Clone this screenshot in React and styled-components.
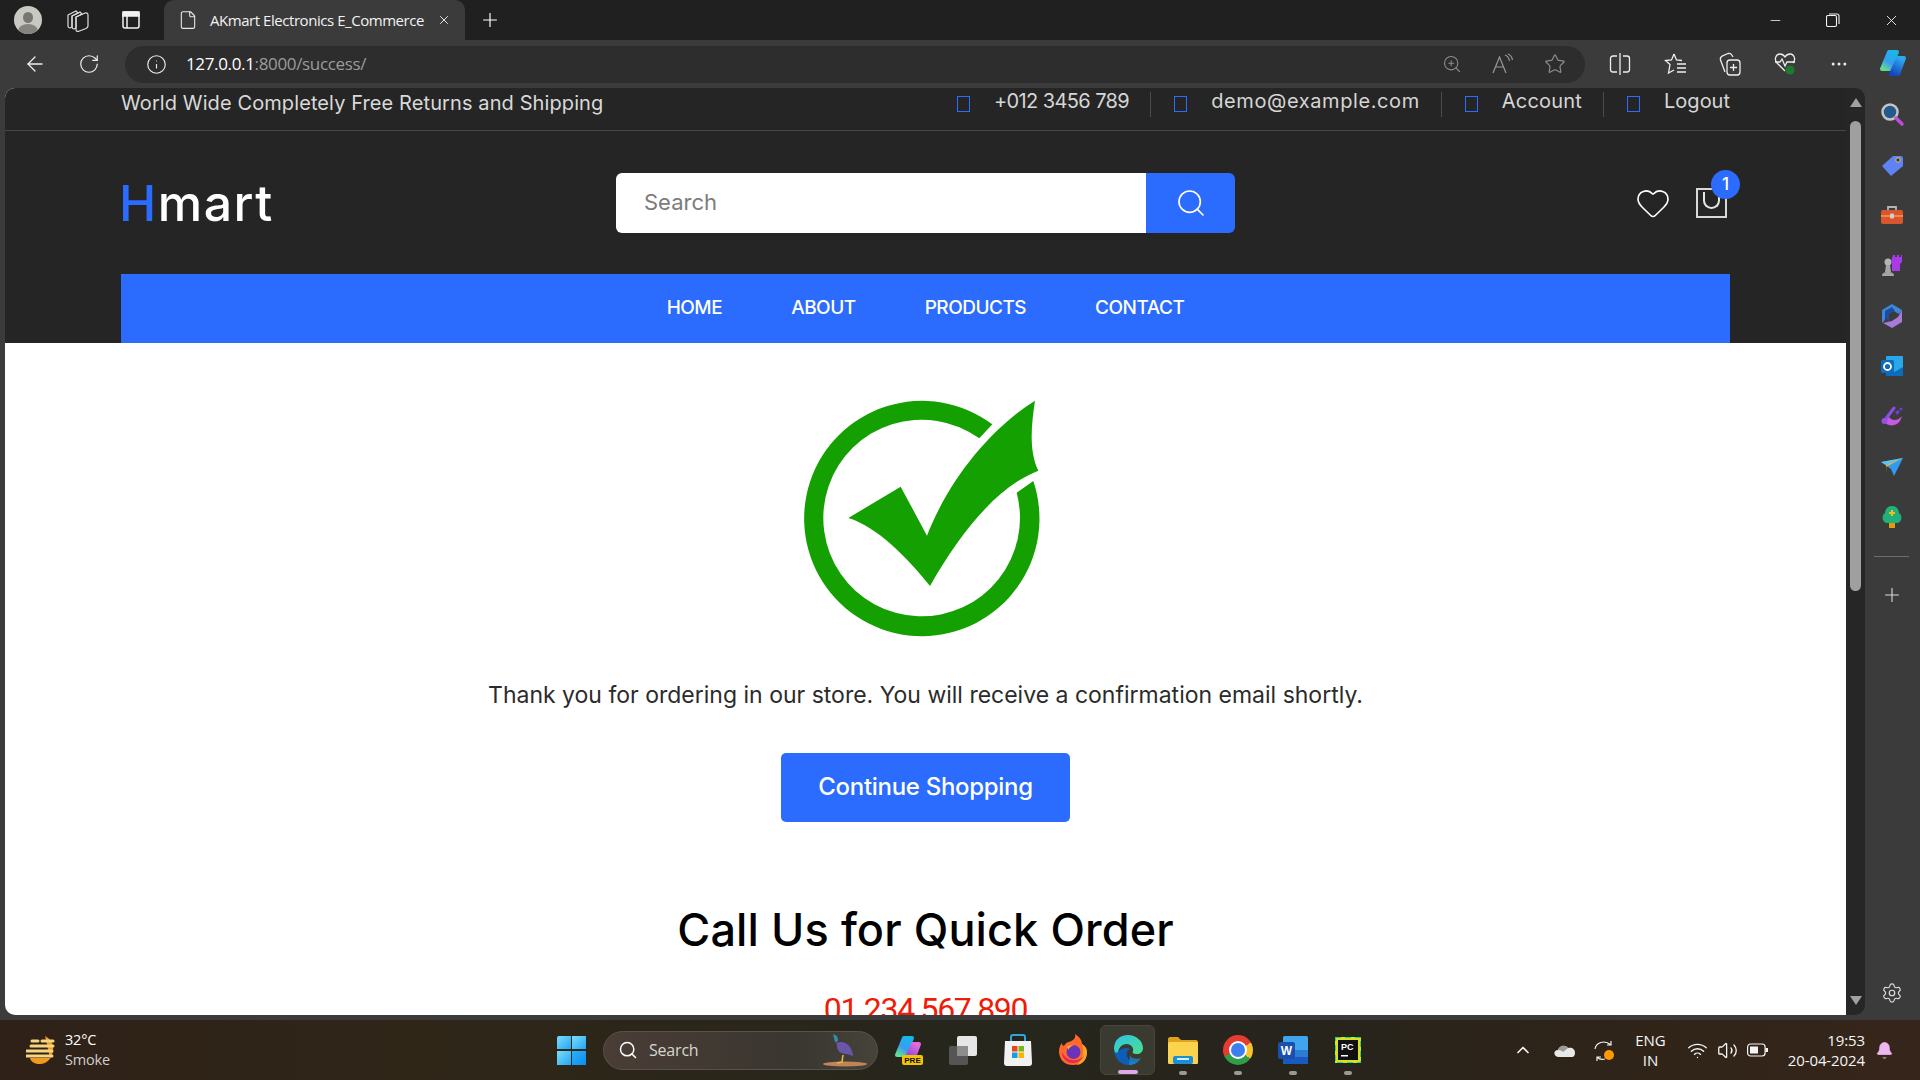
import React from "react";
import styled, { createGlobalStyle } from "styled-components";
import {
  ArrowLeft,
  RotateCw,
  Info,
  ZoomIn,
  Star,
  Plus,
  X,
  Minus,
  Settings,
  Search,
  Heart,
  Wifi,
  Volume2,
  Bell,
  ChevronUp,
  File,
  MoreHorizontal,
} from "lucide-react";

const BLUE = "#2b6bfd";

const GlobalStyle = createGlobalStyle`
  html, body {
    margin: 0;
    padding: 0;
    width: 1920px;
    height: 1080px;
    overflow: hidden;
    background: #3b3b3b;
  }
  * { box-sizing: border-box; }
`;

const Screen = styled.div`
  width: 1920px;
  height: 1080px;
  display: flex;
  flex-direction: column;
  background: #3b3b3b;
  font-family: "Inter", "Liberation Sans", sans-serif;
`;

/* browser title bar */
const TitleBar = styled.div`
  height: 40px;
  flex: none;
  display: flex;
  align-items: center;
  background: #202020;
  color: #fff;
  padding-left: 14px;
`;

const Avatar = styled.div`
  width: 28px;
  height: 28px;
  border-radius: 50%;
  background: #c9c9c4;
  position: relative;
  overflow: hidden;
  margin-right: 25px;
  &::before {
    content: "";
    position: absolute;
    left: 9px;
    top: 6px;
    width: 10px;
    height: 11px;
    border-radius: 50%;
    background: #77766f;
  }
  &::after {
    content: "";
    position: absolute;
    left: 4px;
    top: 18px;
    width: 20px;
    height: 14px;
    border-radius: 50%;
    background: #85847e;
  }
`;

const ChromeGlyph = styled.svg`
  flex: none;
  display: block;
  margin-left: ${(p) => p.$ml || 0}px;
`;

const Tab = styled.div`
  width: 301px;
  height: 40px;
  margin-left: 24px;
  background: #3b3b3b;
  border-radius: 10px 10px 0 0;
  display: flex;
  align-items: center;
  padding-left: 14px;
`;

const TabTitle = styled.span`
  margin-left: 12px;
  width: 227px;
  font-family: "Open Sans", sans-serif;
  font-size: 15px;
  letter-spacing: -0.45px;
  color: #f2f2f2;
  white-space: nowrap;
`;

const NewTab = styled.div`
  margin-left: 14px;
  display: flex;
`;

const WindowControls = styled.div`
  margin-left: auto;
  display: flex;
  align-items: center;
  gap: 43px;
  padding-right: 20px;
`;

/* browser toolbar */
const Toolbar = styled.div`
  height: 48px;
  flex: none;
  display: flex;
  align-items: center;
  color: #efefef;
  padding-left: 23px;
  background: #3b3b3b;
`;

const NavGlyphs = styled.div`
  display: flex;
  align-items: center;
  gap: 31px;
  width: 102px;
`;

const AddressBar = styled.div`
  width: 1460px;
  height: 37px;
  border-radius: 19px;
  background: #2d2d2d;
  display: flex;
  align-items: center;
  padding: 0 19px 0 21px;
`;

const Url = styled.span`
  margin: -2px 0 0 19px;
  font-family: "Open Sans", sans-serif;
  font-size: 17px;
  letter-spacing: -0.35px;
  color: #9b9b9b;
  b {
    font-weight: 400;
    color: #fff;
  }
`;

const AddressActions = styled.div`
  margin-left: auto;
  display: flex;
  align-items: center;
  gap: 30px;
  color: #8c8c8c;
`;

const ToolActions = styled.div`
  margin-left: 24px;
  display: flex;
  align-items: center;
  gap: 33px;
  svg:last-child {
    margin-left: -4px;
  }
`;

/* page + scrollbar + sidebar */
const Workspace = styled.div`
  height: 927px;
  flex: none;
  display: flex;
  padding-left: 5px;
`;

const Viewport = styled.main`
  width: 1841px;
  height: 927px;
  overflow: hidden;
  background: #fff;
  border-radius: 10px 0 0 10px;
`;

const TopBar = styled.div`
  height: 43px;
  display: flex;
  align-items: center;
  justify-content: space-between;
  background: #252525;
  border-bottom: 1px solid #474747;
  padding: 0 116px;
  font-family: "Inter", sans-serif;
  color: #d6d6d6;
`;

const Promo = styled.span`
  font-size: 20px;
  letter-spacing: 0.1px;
  margin-top: -12px;
  color: #d9d9d9;
`;

const TopLinks = styled.div`
  display: flex;
  align-items: center;
  height: 25px;
  margin-top: -9px;
`;

const TopLink = styled.a`
  display: flex;
  align-items: center;
  height: 25px;
  font-size: 20px;
  letter-spacing: ${(p) => p.$ls || "0"};
  padding-left: 23px;
  padding-right: ${(p) => (p.$last ? 0 : 21)}px;
  padding-bottom: 7px;
  border-right: ${(p) => (p.$last ? "none" : "1px solid #4c4c4c")};
  &:first-child {
    padding-left: 0;
  }
`;

const Tofu = styled.i`
  width: 13px;
  height: 16px;
  border: 1px solid ${BLUE};
  margin: 6px 24px 0 0;
`;

const Header = styled.header`
  height: 143px;
  display: flex;
  align-items: center;
  background: #252525;
  padding: 0 116px;
`;

const Logo = styled.div`
  width: 495px;
  margin-left: -2px;
  margin-right: 2px;
  font-size: 50px;
  font-weight: 500;
  letter-spacing: 1.5px;
  color: #fff;
  span {
    color: ${BLUE};
  }
`;

const SearchForm = styled.form`
  width: 619px;
  height: 60px;
  display: flex;
  margin: 0;
`;

const SearchInput = styled.input`
  width: 530px;
  height: 60px;
  border: none;
  outline: none;
  border-radius: 6px 0 0 6px;
  padding: 0 28px 2px;
  font-family: "Inter", sans-serif;
  font-size: 22px;
  color: #777;
  &::placeholder {
    color: #7c7c7c;
    opacity: 1;
  }
`;

const SearchButton = styled.button`
  width: 89px;
  height: 60px;
  border: none;
  border-radius: 0 6px 6px 0;
  background: ${BLUE};
  color: #fff;
  display: flex;
  align-items: center;
  justify-content: center;
  padding: 0;
`;

const HeaderIcons = styled.div`
  margin-left: auto;
  display: flex;
  align-items: center;
  gap: 25px;
  margin-right: 3px;
  color: #fff;
`;

const Cart = styled.div`
  position: relative;
  width: 31px;
  height: 30px;
  border: 2px solid #d8d8d8;
`;

const CartHandle = styled.span`
  position: absolute;
  left: 5px;
  top: 2px;
  width: 17px;
  height: 17px;
  border: 2px solid #e6e6e6;
  border-top: none;
  border-radius: 0 0 10px 10px;
`;

const Badge = styled.span`
  position: absolute;
  right: -15px;
  top: -20px;
  width: 29px;
  height: 29px;
  border-radius: 50%;
  background: ${BLUE};
  color: #fff;
  font-size: 17px;
  font-weight: 500;
  display: flex;
  align-items: center;
  justify-content: center;
`;

const NavBand = styled.div`
  background: #252525;
  padding: 0 116px;
`;

const Nav = styled.nav`
  height: 69px;
  padding-bottom: 2px;
  background: ${BLUE};
  display: flex;
  align-items: center;
  justify-content: center;
  gap: 69px;
`;

const NavLink = styled.a`
  font-size: 19px;
  font-weight: 500;
  letter-spacing: -0.5px;
  color: #fff;
`;

const Content = styled.section`
  display: flex;
  flex-direction: column;
  align-items: center;
  padding-top: 37px;
`;

const Mark = styled.svg`
  display: block;
  flex: none;
  margin-right: 11px;
`;

const Message = styled.p`
  margin: 30px 0 0;
  height: 30px;
  line-height: 30px;
  font-size: 23px;
  color: #2b2b2b;
`;

const ContinueButton = styled.button`
  margin-top: 43px;
  width: 289px;
  height: 69px;
  padding: 0 0 2px;
  border: none;
  border-radius: 5px;
  background: ${BLUE};
  color: #fff;
  font-family: "Inter", sans-serif;
  font-size: 24px;
  font-weight: 500;
  letter-spacing: -0.3px;
`;

const CallTitle = styled.h2`
  margin: 73px 0 0;
  line-height: 70px;
  font-size: 45px;
  font-weight: 500;
  letter-spacing: 0.1px;
  color: #000;
`;

const Phone = styled.a`
  margin-top: 24px;
  font-family: "Roboto", sans-serif;
  font-size: 32px;
  line-height: 40px;
  letter-spacing: -1.3px;
  color: #ee1c08;
`;

/* scrollbar */
const Scrollbar = styled.div`
  width: 19px;
  height: 927px;
  flex: none;
  background: #262626;
  border-radius: 0 10px 10px 0;
  display: flex;
  flex-direction: column;
  align-items: center;
  padding-top: 10px;
`;

const ScrollArrow = styled.span`
  width: 0;
  height: 0;
  border-left: 6.5px solid transparent;
  border-right: 6.5px solid transparent;
  border-bottom: ${(p) => (p.$down ? "none" : "9px solid #a0a0a0")};
  border-top: ${(p) => (p.$down ? "9px solid #a0a0a0" : "none")};
  margin-top: ${(p) => (p.$down ? "auto" : 0)};
  margin-bottom: ${(p) => (p.$down ? "10px" : 0)};
`;

const ScrollThumb = styled.div`
  width: 11px;
  height: 470px;
  margin-top: 14px;
  border-radius: 6px;
  background: #9f9f9f;
`;

/* edge sidebar */
const SideBar = styled.aside`
  flex: 1;
  display: flex;
  flex-direction: column;
  align-items: center;
  padding: 1px 2px 0 0;
  color: #dcdcdc;
`;

const SideItem = styled.div`
  width: 26px;
  height: 50.4px;
  display: flex;
  align-items: center;
  justify-content: center;
  flex: none;
`;

const SideRule = styled.div`
  width: 35px;
  height: 1px;
  background: #6d6d6d;
  margin: 13px 0 27px;
`;

const SideBottom = styled.div`
  margin-top: auto;
  margin-bottom: 11px;
  display: flex;
`;

/* taskbar */
const TaskbarGap = styled.div`
  height: 5px;
  flex: none;
`;

const Taskbar = styled.footer`
  height: 60px;
  flex: none;
  display: flex;
  align-items: center;
  padding-left: 26px;
  background: linear-gradient(90deg, #2f2118 0%, #2f2618 22%, #27261c 48%, #26241c 66%, #2f2419 84%, #36251a 100%);
  color: #fff;
  font-family: "Open Sans", sans-serif;
`;

const Weather = styled.div`
  width: 531px;
  display: flex;
  align-items: center;
  gap: 7px;
`;

const WeatherText = styled.div`
  font-size: 14.5px;
  line-height: 20px;
  letter-spacing: -0.2px;
  span {
    display: block;
    color: #cfcfcf;
  }
`;

const StartButton = styled.div`
  width: 29px;
  height: 29px;
  display: grid;
  grid-template-columns: 1fr 1fr;
  grid-template-rows: 1fr 1fr;
  gap: 1.5px;
  margin-right: 17px;
  i {
    background: linear-gradient(135deg, #7ddcfb, #21a6f5);
  }
  i:nth-child(1) {
    border-radius: 2px 0 0 0;
  }
  i:nth-child(4) {
    background: linear-gradient(135deg, #2cb0fa, #0b8df0);
  }
`;

const TaskSearch = styled.div`
  width: 275px;
  height: 39px;
  border-radius: 20px;
  border: 1px solid #5a5148;
  background: linear-gradient(90deg, #4a3d36, #3a3630 70%, #45433a);
  display: flex;
  align-items: center;
  padding-left: 14px;
  gap: 11px;
  color: #fff;
  span {
    font-size: 16px;
    letter-spacing: -0.2px;
    color: #d6d6d0;
  }
  svg:last-child {
    margin-left: auto;
    margin-right: 8px;
  }
`;

const TaskIcons = styled.div`
  margin-left: 2px;
  display: flex;
  align-items: center;
`;

const TaskItem = styled.div`
  position: relative;
  width: 55px;
  height: 50px;
  border-radius: 6px;
  display: flex;
  align-items: center;
  justify-content: center;
  background: ${(p) => (p.$active ? "#3a3a30" : "transparent")};
  border: 1px solid ${(p) => (p.$active ? "#46463c" : "transparent")};
  &::after {
    content: "";
    display: ${(p) => (p.$open || p.$active ? "block" : "none")};
    position: absolute;
    left: 50%;
    bottom: ${(p) => (p.$active ? "0" : "-1px")};
    transform: translateX(-50%);
    width: ${(p) => (p.$active ? "20px" : "8px")};
    height: 4px;
    border-radius: 2px;
    background: ${(p) => (p.$active ? "#e0a8e8" : "#9a9a94")};
  }
`;

const ChromeLogo = styled.div`
  position: relative;
  width: 30px;
  height: 30px;
  border-radius: 50%;
  background: conic-gradient(#e53b30 0deg 60deg, #fbc02d 60deg 125deg, #2e9e49 125deg 245deg, #e53b30 245deg 360deg);
  &::after {
    content: "";
    position: absolute;
    left: 8px;
    top: 8px;
    width: 14px;
    height: 14px;
    border-radius: 50%;
    background: #3d7ff0;
    box-shadow: 0 0 0 2px #fff;
  }
`;

const Tray = styled.div`
  margin-left: auto;
  display: flex;
  align-items: center;
  font-size: 15px;
  color: #f5f5f5;
`;

const TraySlot = styled.div`
  display: flex;
  margin-left: ${(p) => p.$ml}px;
`;

const Lang = styled.div`
  margin-left: 20px;
  text-align: center;
  font-size: 15px;
  line-height: 20px;
`;

const Clock = styled.div`
  margin-left: 20px;
  text-align: right;
  font-size: 15px;
  line-height: 20px;
  letter-spacing: -0.1px;
`;

const BellSlot = styled.div`
  margin: 0 26px 0 10px;
  display: flex;
  color: #edb6f0;
`;

const WorkspacesIcon = () => (
  <ChromeGlyph width="22" height="24" viewBox="0 0 22 24" fill="none" stroke="#dedede" strokeWidth="1.2">
    <path d="M1 7l8-4 2 2-6 3v11l-2 1c-1 0-2-1-2-2z" />
    <path d="M5 8l8-4 2 2-6 3v11l-2 1c-1 0-2-1-2-2z" />
    <path d="M9 9l9-4c2-.500 3 .500 3 2v11c0 1-1 2-2 2.500l-8 3c-1 0-2-1-2-2z" />
  </ChromeGlyph>
);

const VerticalTabsIcon = () => (
  <ChromeGlyph width="18" height="18" viewBox="0 0 18 18" fill="none" stroke="#f2f2f2" strokeWidth="1.5" $ml={33}>
    <rect x="1" y="1" width="16" height="16" rx="2" />
    <rect x="1" y="1" width="16" height="4" fill="#f2f2f2" />
    <path d="M5 5v12" />
  </ChromeGlyph>
);

const RestoreIcon = () => (
  <ChromeGlyph width="14" height="14" viewBox="0 0 14 14" fill="none" stroke="#f2f2f2" strokeWidth="1.1">
    <rect x="0.5" y="2.5" width="10" height="11" rx="1.5" />
    <path d="M3 1h8c1.2 0 2 .8 2 2v8" />
  </ChromeGlyph>
);

const ReadAloudIcon = () => (
  <svg width="22" height="22" viewBox="0 0 22 22" fill="none" stroke="#9a9a9a" strokeWidth="1.200">
    <path d="M1 20L7.500 4 14 20M3.500 14h8" />
    <path d="M13 2c3 1 4 3 4.500 6M16 1c2.500 1 4 3 4.500 6" />
  </svg>
);

const SplitIcon = () => (
  <svg width="22" height="24" viewBox="0 0 22 24" fill="none" stroke="#efefef" strokeWidth="1.300">
    <path d="M11 1v22" />
    <path d="M8 4H4C2.500 4 1.500 5 1.500 6.500v11C1.500 19 2.500 20 4 20h4M14 4h4c1.500 0 2.500 1 2.500 2.500v11c0 1.500-1 2.500-2.500 2.500h-4" />
  </svg>
);

const FavoritesIcon = () => (
  <svg width="22" height="24" viewBox="0 0 22 24" fill="none" stroke="#efefef" strokeWidth="1.300">
    <path d="M10 2l2.500 6 5.500.5M10 2L7.500 8 1.500 8.500l4.500 4L4.500 21l5.500-3" />
    <path d="M13 12h9M13 16h9M13 20h9" />
  </svg>
);

const CollectionsIcon = () => (
  <svg width="22" height="24" viewBox="0 0 22 24" fill="none" stroke="#efefef" strokeWidth="1.300">
    <rect x="8" y="8" width="13" height="15" rx="3" />
    <path d="M14.500 12v7M11 15.500h7M6 20L1.500 8C1 6 1.500 5 3 4.200L9 1.500c2-.5 3 0 3.800 1.500L14 5" />
  </svg>
);

const HealthIcon = () => (
  <svg width="22" height="24" viewBox="0 0 22 24" fill="none" stroke="#efefef" strokeWidth="1.300">
    <path d="M11 19L3 11C0 8 1.500 2 6 2c2.500 0 4 1.500 5 3 1-1.500 2.500-3 5-3 4.500 0 6 6 3 9" />
    <path d="M1 10h5l2-3 3 7 2-4h8" />
    <circle cx="16" cy="18" r="4.500" fill="#1f7a2e" stroke="none" />
  </svg>
);

const CopilotIcon = ({ pre, id }) => (
  <svg width="30" height="30" viewBox="0 0 30 30">
    <defs>
      <linearGradient id={`${id}L`} x1="0.7" y1="0" x2="0.1" y2="1">
        <stop offset="0" stopColor="#19b6e8" />
        <stop offset="0.55" stopColor="#3a9cf0" />
        <stop offset="1" stopColor="#62dd90" />
      </linearGradient>
      <linearGradient id={`${id}R`} x1="0.7" y1="0" x2="0.2" y2="1">
        <stop offset="0" stopColor={pre ? "#e46bd8" : "#2fa8f0"} />
        <stop offset="1" stopColor={pre ? "#7a3fe0" : "#1446c0"} />
      </linearGradient>
    </defs>
    <path d="M11 3h8L12 20H4z" fill={`url(#${id}L)`} stroke={`url(#${id}L)`} strokeWidth="4" strokeLinejoin="round" />
    <path d="M20 9h6l-6 16h-7z" fill={`url(#${id}R)`} stroke={`url(#${id}R)`} strokeWidth="4" strokeLinejoin="round" />
    {pre && (
      <>
        <rect x="9" y="20" width="21" height="10" rx="2" fill="#f5c400" />
        <text x="19.500" y="28" fontSize="8" fontWeight="700" fontFamily="Liberation Sans, sans-serif" textAnchor="middle" fill="#111">PRE</text>
      </>
    )}
  </svg>
);

const SuccessMark = () => (
  <Mark width="280" height="270" viewBox="0 0 840 810">
    <path d="M637 133A353 353 0 1 0 760 303L710 338A295 295 0 1 1 598 175Z" fill="#14a000" />
    <path d="M205 414L362 320L441 467C510 290 640 140 765 62C755 130 745 210 775 272C650 320 540 460 450 618C380 530 290 440 205 414Z" fill="#14a000" />
  </Mark>
);

const sideIcons = [
  <svg key="s" width="26" height="26" viewBox="0 0 26 26">
    <circle cx="11" cy="11" r="7.500" fill="#245a8a" stroke="#c4c4c4" strokeWidth="2.500" />
    <path d="M17 17l6 6" stroke="#c34bdc" strokeWidth="3.500" strokeLinecap="round" />
  </svg>,
  <svg key="t" width="24" height="24" viewBox="0 0 24 24">
    <path d="M13 3h8c1 0 2 1 2 2v8L11 23 2 13z" fill="#5d83f5" />
    <circle cx="18" cy="7" r="2.200" fill="#2c2c70" stroke="#f5d020" strokeWidth="1" />
  </svg>,
  <svg key="b" width="24" height="22" viewBox="0 0 24 22">
    <path d="M8 6V3h8v3" fill="none" stroke="#b5b5b5" strokeWidth="1.800" />
    <rect x="1" y="6" width="22" height="14" rx="2" fill="#d9552c" />
    <rect x="1" y="11" width="22" height="2" fill="#f0884a" />
    <rect x="10" y="9.500" width="4" height="5" rx="1" fill="#cfcfcf" />
  </svg>,
  <svg key="c" width="24" height="24" viewBox="0 0 24 24">
    <circle cx="8" cy="9" r="3.500" fill="#b4b4b4" />
    <path d="M6 12h4l1 7H5zM2 23c0-3 2-4 6-4s6 1 6 4z" fill="#a5a5a5" />
    <path d="M14 2h2v2h2V2h2v2h2V2h1v7l-2 2v7h-8v-7l-1-2z" transform="translate(-1 0)" fill="#a83ae8" />
  </svg>,
  <svg key="o" width="24" height="26" viewBox="0 0 24 26">
    <path d="M12 1l10 6-3 4-7-4-7 4v6l-3 3V7z" fill="#3f86d8" />
    <path d="M22 7v12l-10 6-9-5 9-2 6-4z" fill="#a77ad9" />
    <path d="M5 8l7-4 3 4-6 3v7l-4-3z" fill="#1a4f9e" />
  </svg>,
  <svg key="ol" width="24" height="24" viewBox="0 0 24 24">
    <rect x="6" y="2" width="17" height="20" rx="1" fill="#28a8ea" />
    <path d="M6 13l8.500 5L23 13v9H6z" fill="#0a6cbc" />
    <rect x="1" y="6" width="13" height="13" rx="1.500" fill="#0f6cbd" />
    <circle cx="7.500" cy="12.500" r="3.500" fill="none" stroke="#fff" strokeWidth="1.800" />
  </svg>,
  <svg key="m" width="24" height="24" viewBox="0 0 24 24">
    <path d="M3 14c2 8 16 10 19-3-4 5-10 5-13 1z" fill="#c65ae0" />
    <path d="M5 15L14 3" stroke="#8d4fe0" strokeWidth="3" strokeLinecap="round" />
    <circle cx="4.500" cy="16" r="3" fill="#9a4ce6" />
    <path d="M15 7l3-2 2 2-3 3z" fill="#6d3fd8" />
    <circle cx="21" cy="4" r="1.500" fill="#6d3fd8" />
  </svg>,
  <svg key="p" width="24" height="20" viewBox="0 0 24 20">
    <path d="M1 5l22-4-9 18-3-7z" fill="#2e9af0" />
    <path d="M1 5l22-4L6 8z" fill="#5ec2f5" />
    <path d="M6 8L23 1 6 10 7 16z" fill="#f4b521" />
  </svg>,
  <svg key="tr" width="20" height="24" viewBox="0 0 20 24">
    <rect x="7" y="17" width="6" height="6" fill="#e09b14" />
    <path d="M10 1c5 0 7 4 7 7 2 1 3 4 2 7-1 2-2 3-4 3H5c-2 0-3-1-4-3-1-3 0-6 2-7 0-3 2-7 7-7z" fill="#22b07a" />
    <path d="M10 5v6M7 8h6" stroke="#f0c020" strokeWidth="2" />
  </svg>,
];

const FilesIcon = () => (
  <svg width="30" height="30" viewBox="0 0 30 30">
    <rect x="1" y="11" width="19" height="19" rx="2" fill="#555" />
    <rect x="9" y="1" width="20" height="20" rx="2" fill="#e6e6e6" />
    <rect x="9" y="11" width="11" height="10" fill="#8d8d8d" />
  </svg>
);

const StoreIcon = () => (
  <svg width="30" height="32" viewBox="0 0 30 32">
    <path d="M8 8V3c0-1 1-2 2-2h10c1 0 2 1 2 2v5" fill="none" stroke="#2aa7e0" strokeWidth="2" />
    <path d="M2 7h26l1 22c0 2-1 3-3 3H4c-2 0-3-1-3-3z" fill="#f2f2f2" />
    <rect x="9" y="12" width="5.500" height="5.500" fill="#e8471c" />
    <rect x="15.500" y="12" width="5.500" height="5.500" fill="#7ab51d" />
    <rect x="9" y="18.500" width="5.500" height="5.500" fill="#1b9be0" />
    <rect x="15.500" y="18.500" width="5.500" height="5.500" fill="#f7b500" />
  </svg>
);

const FirefoxIcon = () => (
  <svg width="30" height="32" viewBox="0 0 30 32">
    <path d="M15 31C6 31 1 25 1 17 1 13 3 10 4 9c0 2 1 3 2 3 1-2 3-4 5-4 5-2 7-4 6-8 5 3 7 7 7 10 3 2 5 4 5 8 0 9-6 13-14 13z" fill="#ff6a2b" />
    <path d="M24 10c3 2 5 5 5 8 0 7-4 12-10 13 5-5 8-13 5-21z" fill="#f5a623" />
    <path d="M15 29C8 29 4 24 4 18c3 6 8 9 14 8 3 0 6-2 8-4-2 4-6 7-11 7z" fill="#e8284f" />
    <circle cx="15.500" cy="18" r="7" fill="#6a33b8" />
    <path d="M9 13c2-2 5-2 7-1-3 0-5 1-5 4z" fill="#ffae3d" />
  </svg>
);

const EdgeIcon = () => (
  <svg width="30" height="32" viewBox="0 0 30 32">
    <defs>
      <linearGradient id="edgeA" x1="0" y1="0" x2="1" y2="1">
        <stop offset="0" stopColor="#2ec4e6" />
        <stop offset="1" stopColor="#4be08c" />
      </linearGradient>
    </defs>
    <path d="M1 15C1 6 7 1 15 1c8 0 15 6 15 13 0 4-3 6-6 6-4 0-5-1-4-3 1-3-2-7-6-7-6 0-9 5-9 9 0 3-4 2-4-4z" fill="url(#edgeA)" />
    <path d="M1 15c0 9 6 16 15 16 3 0 6-1 8-3-5 1-9-2-10-6-1-3 1-6 3-7-3-2-9-1-12 3-2 2-3 0-4-3z" fill="#0c5eb8" />
    <path d="M16 31c5 0 9-2 12-7-2 1-5 1-8 0-1 0-3-2-3-3z" fill="#1c8fd8" opacity="0.7" />
  </svg>
);

const FolderIcon = () => (
  <svg width="30" height="28" viewBox="0 0 30 28">
    <path d="M0 3c0-1 1-2 2-2h8l3 3h15c1 0 2 1 2 2v20c0 1-1 2-2 2H2c-1 0-2-1-2-2z" fill="#e0a21c" />
    <rect x="0" y="6" width="30" height="22" rx="1.500" fill="#fbd34e" />
    <rect x="5" y="20" width="20" height="8" rx="2" fill="#1a8fd8" />
    <rect x="9" y="22" width="12" height="2" fill="#d8f0ff" />
  </svg>
);

const WordIcon = () => (
  <svg width="30" height="28" viewBox="0 0 30 28">
    <rect x="5" y="0" width="25" height="28" rx="1.500" fill="#41a5ee" />
    <rect x="5" y="14" width="25" height="7" fill="#2b7cd3" />
    <rect x="5" y="21" width="25" height="7" fill="#185abd" />
    <rect x="0" y="6" width="17" height="17" rx="2" fill="#1a4fae" />
    <text x="8.500" y="19" fontSize="12" fontWeight="700" fontFamily="Liberation Sans, sans-serif" textAnchor="middle" fill="#fff">W</text>
  </svg>
);

const PyCharmIcon = () => (
  <svg width="26" height="26" viewBox="0 0 26 26">
    <rect x="0" y="0" width="26" height="26" fill="#d6e21f" />
    <rect x="0" y="0" width="26" height="26" fill="none" stroke="#21d789" strokeWidth="2" strokeDasharray="6 4" />
    <rect x="3" y="3" width="20" height="20" fill="#101010" />
    <text x="6" y="13" fontSize="9" fontWeight="700" fontFamily="Liberation Sans, sans-serif" fill="#fff">PC</text>
    <rect x="6" y="18" width="7" height="1.500" fill="#fff" />
  </svg>
);

const WeatherIcon = () => (
  <svg width="32" height="28" viewBox="0 0 32 28">
    <path d="M19 0c6 3 9 8 8 15-1 7-6 13-13 13-5 0-9-2-10-6h20z" fill="#ef9a1f" />
    <path d="M6 5h6M16 5h11M5 10h22M1 15h25M0 20h26" stroke="#f6d480" strokeWidth="3" strokeLinecap="round" />
  </svg>
);

const BirdIcon = () => (
  <svg width="46" height="34" viewBox="0 0 46 34">
    <ellipse cx="22" cy="31" rx="22" ry="2.500" fill="#c08456" />
    <path d="M12 3l3 2-1 5c3-2 10-1 13 4 2 3 3 6 3 9-3-1-5-2-7-2-5 0-9-3-9-8z" fill="#6a55a8" />
    <path d="M10 1l4 2 1 5-3 1z" fill="#2f8fb0" />
    <path d="M20 22l-1 7-5 1" fill="none" stroke="#e2b840" strokeWidth="1.600" />
  </svg>
);

const CloudIcon = () => (
  <svg width="21" height="14" viewBox="0 0 21 14">
    <path d="M5 14c-6 0-6-7-1-7 1-4 7-6 10-2 4-1 7 1 7 5 0 2-1 4-3 4z" fill="#e8e8e8" />
    <path d="M4 7c3 0 4 1 5 2l5-4c-3-4-9-2-10 2z" fill="#9b9b9b" />
  </svg>
);

const SyncIcon = () => (
  <svg width="21" height="21" viewBox="0 0 21 21" fill="none" stroke="#f2f2f2" strokeWidth="1.200">
    <path d="M1 9C2 3 10-1 17 5M17 1v4h-4" />
    <path d="M3 21v-4h4M3 17c2 2 5 3 8 2" />
    <circle cx="15" cy="15" r="5" fill="#ff9800" stroke="none" />
  </svg>
);

const BatteryIcon = () => (
  <svg width="21" height="14" viewBox="0 0 21 14" fill="none" stroke="#f5f5f5" strokeWidth="1.200">
    <rect x="0.600" y="1" width="17.500" height="12" rx="3" />
    <rect x="3" y="3.500" width="8" height="7" fill="#f5f5f5" stroke="none" />
    <rect x="18.500" y="5" width="2.500" height="4" fill="#f5f5f5" stroke="none" />
  </svg>
);

const App = () => {
  return (
    <Screen>
      <GlobalStyle />
      <TitleBar>
        <Avatar />
        <WorkspacesIcon />
        <VerticalTabsIcon />
        <Tab>
          <File size={20} strokeWidth={1.3} color="#e8e8e8" />
          <TabTitle>AKmart Electronics E_Commerce</TabTitle>
          <X size={14} strokeWidth={1.5} />
        </Tab>
        <NewTab>
          <Plus size={22} strokeWidth={1.3} />
        </NewTab>
        <WindowControls>
          <Minus size={15} strokeWidth={1.2} />
          <RestoreIcon />
          <X size={17} strokeWidth={1.2} />
        </WindowControls>
      </TitleBar>

      <Toolbar>
        <NavGlyphs>
          <ArrowLeft size={24} strokeWidth={1.3} />
          <RotateCw size={22} strokeWidth={1.3} />
        </NavGlyphs>
        <AddressBar>
          <Info size={21} strokeWidth={1.3} />
          <Url>
            <b>127.0.0.1</b>:8000/success/
          </Url>
          <AddressActions>
            <ZoomIn size={20} strokeWidth={1.3} />
            <ReadAloudIcon />
            <Star size={22} strokeWidth={1.3} />
          </AddressActions>
        </AddressBar>
        <ToolActions>
          <SplitIcon />
          <FavoritesIcon />
          <CollectionsIcon />
          <HealthIcon />
          <MoreHorizontal size={20} strokeWidth={1.6} />
          <CopilotIcon id="cpTool" />
        </ToolActions>
      </Toolbar>

      <Workspace>
        <Viewport>
          <TopBar>
            <Promo>World Wide Completely Free Returns and Shipping</Promo>
            <TopLinks>
              <TopLink $ls="-0.6px">
                <Tofu />
                +012 3456 789
              </TopLink>
              <TopLink $ls="0.6px">
                <Tofu />
                demo@example.com
              </TopLink>
              <TopLink $ls="0.2px">
                <Tofu />
                Account
              </TopLink>
              <TopLink $last>
                <Tofu />
                Logout
              </TopLink>
            </TopLinks>
          </TopBar>

          <Header>
            <Logo>
              <span>H</span>mart
            </Logo>
            <SearchForm>
              <SearchInput placeholder="Search" />
              <SearchButton type="button">
                <Search size={32} strokeWidth={1.25} />
              </SearchButton>
            </SearchForm>
            <HeaderIcons>
              <Heart size={36} strokeWidth={1.1} />
              <Cart>
                <CartHandle />
                <Badge>1</Badge>
              </Cart>
            </HeaderIcons>
          </Header>

          <NavBand>
            <Nav>
              <NavLink>HOME</NavLink>
              <NavLink>ABOUT</NavLink>
              <NavLink>PRODUCTS</NavLink>
              <NavLink>CONTACT</NavLink>
            </Nav>
          </NavBand>

          <Content>
            <SuccessMark />
            <Message>Thank you for ordering in our store. You will receive a confirmation email shortly.</Message>
            <ContinueButton>Continue Shopping</ContinueButton>
            <CallTitle>Call Us for Quick Order</CallTitle>
            <Phone>01 234 567 890</Phone>
          </Content>
        </Viewport>

        <Scrollbar>
          <ScrollArrow />
          <ScrollThumb />
          <ScrollArrow $down />
        </Scrollbar>

        <SideBar>
          {sideIcons.map((icon, i) => (
            <SideItem key={i}>{icon}</SideItem>
          ))}
          <SideRule />
          <Plus size={22} strokeWidth={1.2} />
          <SideBottom>
            <Settings size={22} strokeWidth={1.3} />
          </SideBottom>
        </SideBar>
      </Workspace>

      <TaskbarGap />

      <Taskbar>
        <Weather>
          <WeatherIcon />
          <WeatherText>
            32°C
            <span>Smoke</span>
          </WeatherText>
        </Weather>
        <StartButton>
          <i />
          <i />
          <i />
          <i />
        </StartButton>
        <TaskSearch>
          <Search size={20} strokeWidth={1.8} />
          <span>Search</span>
          <BirdIcon />
        </TaskSearch>
        <TaskIcons>
          <TaskItem>
            <CopilotIcon pre id="cpTask" />
          </TaskItem>
          <TaskItem>
            <FilesIcon />
          </TaskItem>
          <TaskItem>
            <StoreIcon />
          </TaskItem>
          <TaskItem>
            <FirefoxIcon />
          </TaskItem>
          <TaskItem $active>
            <EdgeIcon />
          </TaskItem>
          <TaskItem $open>
            <FolderIcon />
          </TaskItem>
          <TaskItem $open>
            <ChromeLogo />
          </TaskItem>
          <TaskItem $open>
            <WordIcon />
          </TaskItem>
          <TaskItem $open>
            <PyCharmIcon />
          </TaskItem>
        </TaskIcons>
        <Tray>
          <ChevronUp size={20} strokeWidth={2} />
          <TraySlot $ml={21}>
            <CloudIcon />
          </TraySlot>
          <TraySlot $ml={19}>
            <SyncIcon />
          </TraySlot>
          <Lang>
            ENG
            <br />
            IN
          </Lang>
          <TraySlot $ml={21}>
            <Wifi size={21} strokeWidth={1.6} />
          </TraySlot>
          <TraySlot $ml={9}>
            <Volume2 size={21} strokeWidth={1.5} />
          </TraySlot>
          <TraySlot $ml={9}>
            <BatteryIcon />
          </TraySlot>
          <Clock>
            19:53
            <br />
            20-04-2024
          </Clock>
          <BellSlot>
            <Bell size={19} fill="#edb6f0" strokeWidth={1} />
          </BellSlot>
        </Tray>
      </Taskbar>
    </Screen>
  );
};

export default App;
